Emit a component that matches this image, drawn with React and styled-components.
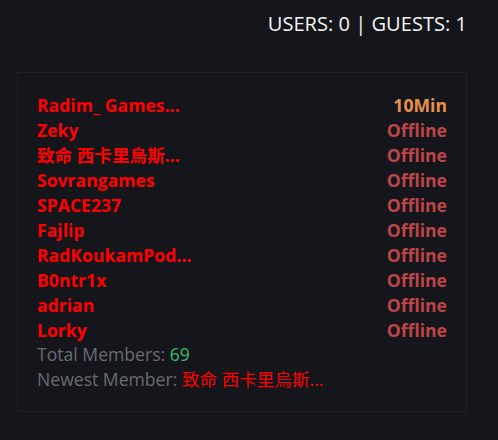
import React from 'react';
import styled, {createGlobalStyle} from "styled-components";

const GlobalStyle = createGlobalStyle`
  html, body {
    margin: 0;
    background: #14161b;
  }
  body {
    font-family: "Open Sans", "Noto Sans CJK SC", sans-serif;
  }
`;

const StyledPage = styled.div`
  width: 498px;
  height: 440px;
  box-sizing: border-box;
  padding: 12px 31px 0 17px;
`;

const Counter = styled.div`
  text-align: right;
  color: #f4f4f4;
  font-size: 20.1px;
  line-height: 24px;
  margin-bottom: 36px;
`;

const Panel = styled.div`
  border: 1px solid #1f2126;
  padding: 19px 19px 19px 19px;
`;

const MemberRow = styled.div`
  display: flex;
  justify-content: space-between;
  align-items: center;
  height: 25px;
  font-size: 17.6px;
  font-weight: 700;
`;

const Name = styled.span`
  color: #ff0000;
`;

const Status = styled.span`
  color: ${({$online}) => $online ? '#e8914a' : '#bd4447'};
`;

const StatLine = styled.div`
  height: 25px;
  line-height: 25px;
  font-size: 17.6px;
  color: #686b70;
`;

const StatValue = styled.span`
  color: ${({$color}) => $color};
`;

const members = [
    {name: 'Radim_ Games...', status: '10Min', online: true},
    {name: 'Zeky', status: 'Offline'},
    {name: '致命 西卡里烏斯...', status: 'Offline'},
    {name: 'Sovrangames', status: 'Offline'},
    {name: 'SPACE237', status: 'Offline'},
    {name: 'Fajlip', status: 'Offline'},
    {name: 'RadKoukamPod...', status: 'Offline'},
    {name: 'B0ntr1x', status: 'Offline'},
    {name: 'adrian', status: 'Offline'},
    {name: 'Lorky', status: 'Offline'},
];

const App = () => {
    return (
        <StyledPage>
            <GlobalStyle/>
            <Counter>USERS: 0 | GUESTS: 1</Counter>
            <Panel>
                {members.map(({name, status, online}) => (
                    <MemberRow key={name}>
                        <Name>{name}</Name>
                        <Status $online={online}>{status}</Status>
                    </MemberRow>
                ))}
                <StatLine>Total Members: <StatValue $color={'#3dba6f'}>69</StatValue></StatLine>
                <StatLine>Newest Member: <StatValue $color={'#ff0000'}>致命 西卡里烏斯...</StatValue></StatLine>
            </Panel>
        </StyledPage>
    );
};

export default App;
